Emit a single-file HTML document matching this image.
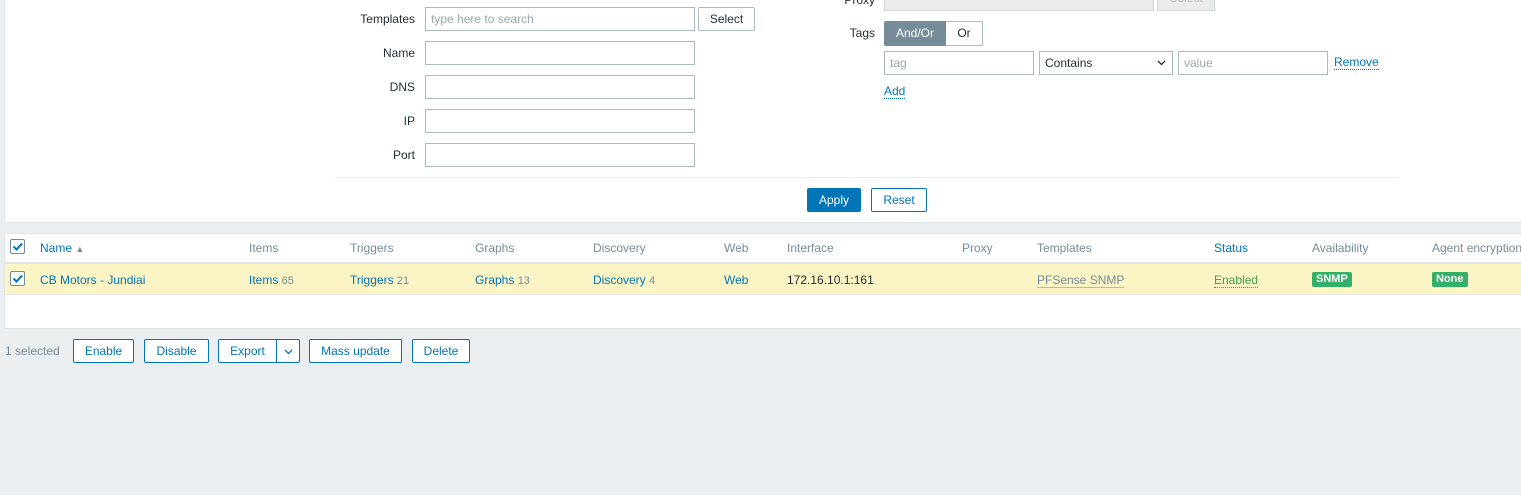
<!DOCTYPE html>
<html><head><meta charset="utf-8"><style>
*{box-sizing:border-box;margin:0;padding:0}
body{width:1521px;height:495px;background:#ebeef0;font-family:"Liberation Sans",Arial,sans-serif;font-size:12px;color:#1f2c33;position:relative;overflow:hidden}
.a{position:absolute}
.panel{background:#fff;border:1px solid #dfe4e7}
.lbl{position:absolute;text-align:right;width:120px;line-height:24px}
.inp{position:absolute;height:24px;border:1px solid #acbbc2;background:#fff;line-height:22px;padding-left:5px;color:#9aa8ae}
.btn{position:absolute;height:24px;border:1px solid #0275b8;background:#fff;color:#0275b8;text-align:center;line-height:22px;border-radius:2px}
.lnk{color:#0275b8}
.g{color:#768d99}
.cnt{color:#768d99;font-size:11px}
.cb{position:absolute;width:15px;height:15px;border:1px solid #768d99;background:#fff;border-radius:2px}
.cb svg{position:absolute;left:1px;top:1px}
.tag{position:absolute;background:#34af67;color:#fff;font-weight:bold;font-size:11px;height:15px;line-height:15px;padding:0 4px;border-radius:2px}
</style></head><body>
<div class="a panel" style="left:4px;top:-1px;width:1520px;height:224px"></div>
<div class="lbl" style="left:295px;top:7px">Templates</div>
<div class="inp" style="left:425px;top:7px;width:270px">type here to search</div>
<div class="btn" style="left:698px;top:7px;width:57px;border-color:#acbbc2;color:#1f2c33">Select</div>
<div class="lbl" style="left:295px;top:41px">Name</div>
<div class="inp" style="left:425px;top:41px;width:270px"></div>
<div class="lbl" style="left:295px;top:75px">DNS</div>
<div class="inp" style="left:425px;top:75px;width:270px"></div>
<div class="lbl" style="left:295px;top:109px">IP</div>
<div class="inp" style="left:425px;top:109px;width:270px"></div>
<div class="lbl" style="left:295px;top:143px">Port</div>
<div class="inp" style="left:425px;top:143px;width:270px"></div>

<div class="lbl" style="left:755px;top:-12px">Proxy</div>
<div class="a" style="left:884px;top:-14px;width:270px;height:25px;background:#ebebeb;border:1px solid #d0d8dc"></div>
<div class="a" style="left:1157px;top:-14px;width:58px;height:25px;background:#ebebeb;border:1px solid #d0d8dc;color:#b8c0c4;text-align:center;line-height:23px">Select</div>
<div class="lbl" style="left:755px;top:21px">Tags</div>
<div class="a" style="left:884px;top:21px;width:62px;height:25px;background:#768d99;color:#fff;text-align:center;line-height:25px;border-radius:2px 0 0 2px">And/Or</div>
<div class="a" style="left:946px;top:21px;width:37px;height:25px;border:1px solid #acbbc2;border-left:none;text-align:center;line-height:23px;border-radius:0 2px 2px 0">Or</div>
<div class="inp" style="left:884px;top:51px;width:150px">tag</div>
<div class="inp" style="left:1039px;top:51px;width:134px;color:#1f2c33">Contains<svg class="a" style="right:6px;top:8px" width="9" height="6"><path d="M1 1l3.5 3.5L8 1" stroke="#1f2c33" fill="none" stroke-width="1.3"/></svg></div>
<div class="inp" style="left:1178px;top:51px;width:150px">value</div>
<div class="a lnk" style="left:1334px;top:56px;border-bottom:1px dotted #0275b8;line-height:13px">Remove</div>
<div class="a lnk" style="left:884px;top:85px;border-bottom:1px dotted #0275b8;line-height:13px">Add</div>

<div class="a" style="left:335px;top:177px;width:1064px;height:1px;background:#ebeef0"></div>
<div class="btn" style="left:807px;top:188px;width:54px;background:#0275b8;color:#fff">Apply</div>
<div class="btn" style="left:871px;top:188px;width:56px">Reset</div>

<div class="a panel" style="left:4px;top:233px;width:1520px;height:96px"></div>
<div class="a" style="left:5px;top:262px;width:1516px;height:2px;background:#dfe4e7"></div>
<div class="a" style="left:5px;top:264px;width:1516px;height:31px;background:#fbf5c5;border-bottom:1px solid #e8e8e0"></div>
<div class="cb" style="left:10px;top:239px"><svg width="11" height="11"><path d="M1.5 5.5l3 3L10 2.5" stroke="#0275b8" stroke-width="2" fill="none"/></svg></div>
<div class="cb" style="left:10px;top:271px"><svg width="11" height="11"><path d="M1.5 5.5l3 3L10 2.5" stroke="#0275b8" stroke-width="2" fill="none"/></svg></div>
<div class="a lnk" style="left:40px;top:241px">Name <span style="font-size:9px;color:#768d99">▲</span></div>
<div class="a g" style="left:249px;top:241px">Items</div>
<div class="a g" style="left:350px;top:241px">Triggers</div>
<div class="a g" style="left:475px;top:241px">Graphs</div>
<div class="a g" style="left:593px;top:241px">Discovery</div>
<div class="a g" style="left:724px;top:241px">Web</div>
<div class="a g" style="left:787px;top:241px">Interface</div>
<div class="a g" style="left:962px;top:241px">Proxy</div>
<div class="a g" style="left:1037px;top:241px">Templates</div>
<div class="a lnk" style="left:1214px;top:241px">Status</div>
<div class="a g" style="left:1312px;top:241px">Availability</div>
<div class="a g" style="left:1432px;top:241px;white-space:nowrap">Agent encryption</div>

<div class="a lnk" style="left:40px;top:273px">CB Motors - Jundiai</div>
<div class="a lnk" style="left:249px;top:273px">Items <span class="cnt">65</span></div>
<div class="a lnk" style="left:350px;top:273px">Triggers <span class="cnt">21</span></div>
<div class="a lnk" style="left:475px;top:273px">Graphs <span class="cnt">13</span></div>
<div class="a lnk" style="left:593px;top:273px">Discovery <span class="cnt">4</span></div>
<div class="a lnk" style="left:724px;top:273px">Web</div>
<div class="a" style="left:787px;top:273px">172.16.10.1:161</div>
<div class="a g" style="left:1037px;top:273px;border-bottom:1px solid #acbbc2;line-height:14px">PFSense SNMP</div>
<div class="a" style="left:1214px;top:273px;color:#429e47;border-bottom:1px dotted #429e47;line-height:14px">Enabled</div>
<div class="tag" style="left:1312px;top:272px">SNMP</div>
<div class="tag" style="left:1432px;top:272px">None</div>

<div class="a g" style="left:5px;top:344px">1 selected</div>
<div class="btn" style="left:73px;top:339px;width:61px">Enable</div>
<div class="btn" style="left:144px;top:339px;width:65px">Disable</div>
<div class="btn" style="left:218px;top:339px;width:59px;border-radius:2px 0 0 2px">Export</div>
<div class="btn" style="left:276px;top:339px;width:24px;border-radius:0 2px 2px 0"><svg width="9" height="6" style="margin-top:8px"><path d="M1 1l3.5 3.5L8 1" stroke="#0275b8" fill="none" stroke-width="1.3"/></svg></div>
<div class="btn" style="left:309px;top:339px;width:93px">Mass update</div>
<div class="btn" style="left:412px;top:339px;width:58px">Delete</div>
</body></html>
